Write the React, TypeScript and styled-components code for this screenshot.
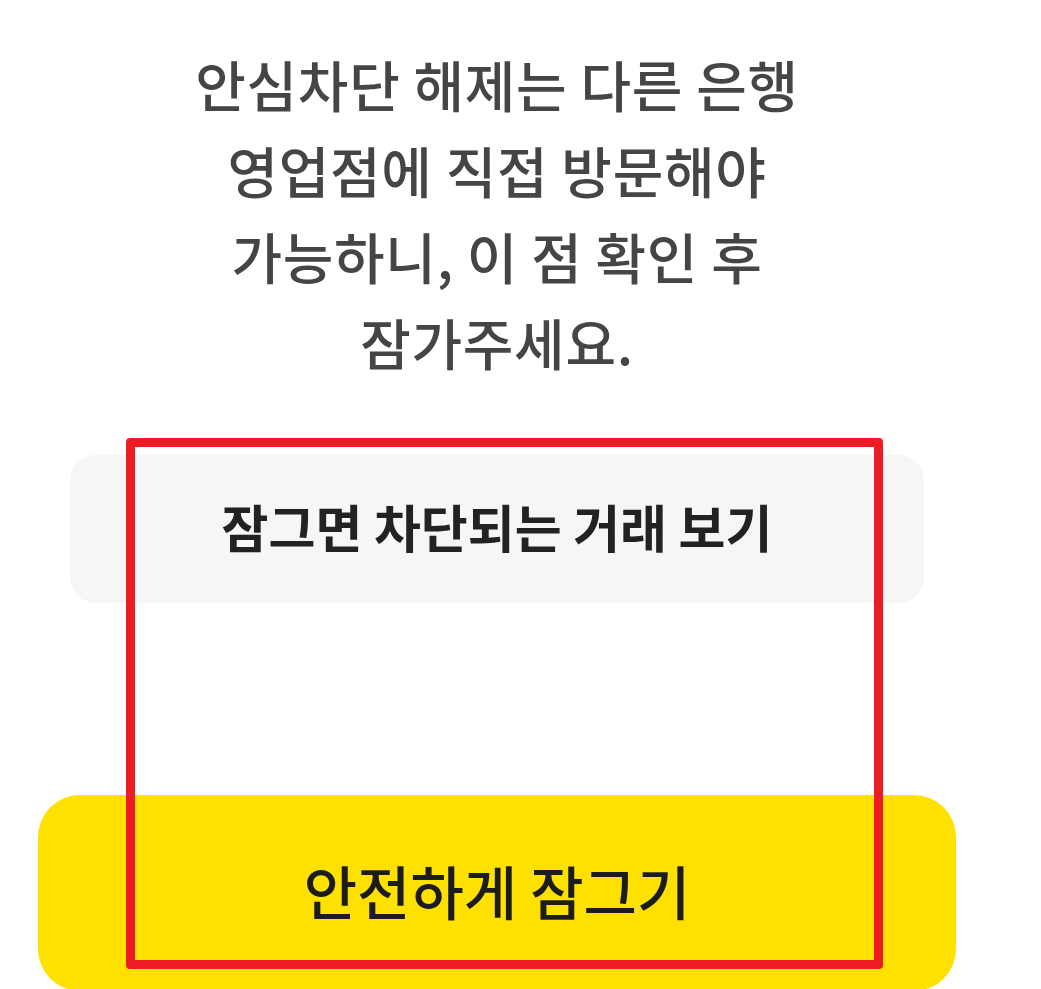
import styled, { createGlobalStyle } from "styled-components";

const GlobalStyle = createGlobalStyle`
  html, body {
    margin: 0;
    padding: 0;
    background: #ffffff;
  }
  body {
    font-family: "Noto Sans CJK KR", "Noto Sans", sans-serif;
    overflow: hidden;
  }
`;

const Screen = styled.main`
  position: relative;
  width: 918px;
  margin-left: 38px;
  padding-top: 40px;
  display: flex;
  flex-direction: column;
  align-items: stretch;
`;

const Notice = styled.p`
  margin: 0;
  text-align: center;
  font-size: 55px;
  line-height: 86px;
  font-weight: 500;
  letter-spacing: 0.7px;
  color: #454545;
`;

const DetailLink = styled.button`
  margin: 71px 32px 0;
  height: 148px;
  padding: 0 0 6px;
  border: none;
  border-radius: 26px;
  background: #f6f6f6;
  font-family: inherit;
  font-size: 51px;
  font-weight: 700;
  letter-spacing: 0;
  color: #222222;
  display: flex;
  align-items: center;
  justify-content: center;
`;

const LockButton = styled.button`
  margin-top: 192px;
  height: 196px;
  padding: 0 0 6px;
  border: none;
  border-radius: 42px;
  background: #fee100;
  font-family: inherit;
  font-size: 58px;
  font-weight: 500;
  letter-spacing: 0;
  color: #1c1c1c;
  display: flex;
  align-items: center;
  justify-content: center;
`;

// red highlight frame drawn over the actions
const Highlight = styled.div`
  position: absolute;
  left: 88px;
  top: 438px;
  width: 757px;
  height: 531px;
  box-sizing: border-box;
  border: 9px solid #ed1c24;
  border-radius: 4px;
  pointer-events: none;
`;

export default function App() {
  return (
    <>
      <GlobalStyle />
      <Screen>
        <Notice>
          안심차단 해제는 다른 은행
          <br />
          영업점에 직접 방문해야
          <br />
          가능하니, 이 점 확인 후
          <br />
          잠가주세요.
        </Notice>
        <DetailLink>잠그면 차단되는 거래 보기</DetailLink>
        <LockButton>안전하게 잠그기</LockButton>
        <Highlight />
      </Screen>
    </>
  );
}
